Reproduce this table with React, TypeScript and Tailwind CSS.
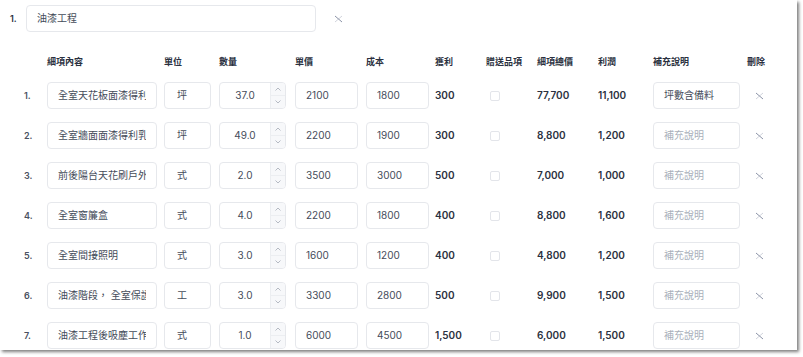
const fontStack = "font-['Inter','Noto_Sans_CJK_TC',sans-serif]";

type Item = {
  name: string;
  unit: string;
  qty: string;
  price: string;
  cost: string;
  profit: string;
  total: string;
  margin: string;
  note?: string;
};

const items: Item[] = [
  { name: "全室天花板面漆得利乳膠漆", unit: "坪", qty: "37.0", price: "2100", cost: "1800", profit: "300", total: "77,700", margin: "11,100", note: "坪數含備料" },
  { name: "全室牆面面漆得利乳膠漆", unit: "坪", qty: "49.0", price: "2200", cost: "1900", profit: "300", total: "8,800", margin: "1,200" },
  { name: "前後陽台天花刷戶外漆", unit: "式", qty: "2.0", price: "3500", cost: "3000", profit: "500", total: "7,000", margin: "1,000" },
  { name: "全室窗簾盒", unit: "式", qty: "4.0", price: "2200", cost: "1800", profit: "400", total: "8,800", margin: "1,600" },
  { name: "全室間接照明", unit: "式", qty: "3.0", price: "1600", cost: "1200", profit: "400", total: "4,800", margin: "1,200" },
  { name: "油漆階段， 全室保護", unit: "工", qty: "3.0", price: "3300", cost: "2800", profit: "500", total: "9,900", margin: "1,500" },
  { name: "油漆工程後吸塵工作", unit: "式", qty: "1.0", price: "6000", cost: "4500", profit: "1,500", total: "6,000", margin: "1,500" },
];

function CloseMark() {
  return (
    <svg width="9" height="8" viewBox="0 0 9 8" fill="none">
      <path d="M1 1 L8 7" stroke="#8b93a7" strokeWidth="1" />
      <path d="M8 1 L1 7" stroke="#8b93a7" strokeWidth="1" opacity="0.4" />
    </svg>
  );
}

// 입력칸 모양 (텍스트는 padding 안쪽에서 잘림)
function Box({ value, className = "", placeholder = false }: { value: string; className?: string; placeholder?: boolean }) {
  return (
    <div
      className={`h-[27px] flex items-center px-[10px] border border-[#e6e8ec] rounded-[4px] bg-white text-[10px] ${placeholder ? "text-[#a9afba]" : "text-[#454c5a]"} ${className}`}
    >
      <div className="w-full overflow-hidden whitespace-nowrap">{value}</div>
    </div>
  );
}

function QtyBox({ value }: { value: string }) {
  return (
    <div className="h-[27px] w-[67px] flex border border-[#e6e8ec] rounded-[4px] bg-white overflow-hidden">
      <div className="flex-1 flex items-center justify-center text-[10px] text-[#454c5a]">{value}</div>
      <div className="w-[15px] flex flex-col bg-[#f7f8fa] border-l border-[#eceef1]">
        <div className="flex-1 flex items-center justify-center border-b border-[#eceef1]">
          <svg width="6" height="4" viewBox="0 0 6 4" fill="none">
            <path d="M0.5 3.5 L3 1 L5.5 3.5" stroke="#a3a9b5" strokeWidth="0.8" />
          </svg>
        </div>
        <div className="flex-1 flex items-center justify-center">
          <svg width="6" height="4" viewBox="0 0 6 4" fill="none">
            <path d="M0.5 0.5 L3 3 L5.5 0.5" stroke="#a3a9b5" strokeWidth="0.8" />
          </svg>
        </div>
      </div>
    </div>
  );
}

export default function App() {
  return (
    <div className={`w-[803px] h-[357px] bg-white ${fontStack}`}>
      <div className="w-[797px] h-[350px] bg-white overflow-hidden shadow-[2px_2px_3px_rgba(0,0,0,0.5)] pt-[5px]">
        <div className="flex items-center">
          <div className="w-[26px] pl-[10px] text-[9px] font-semibold text-[#2b3140]">1.</div>
          <Box value="油漆工程" className="w-[290px]" />
          <div className="ml-[18px] flex items-center">
            <CloseMark />
          </div>
        </div>

        <div className="flex items-center h-[20px] mt-[20px] text-[9px] font-bold text-[#2b3140]">
          <div className="w-[47px]" />
          <div className="w-[117px]">細項內容</div>
          <div className="w-[55px]">單位</div>
          <div className="w-[76px]">數量</div>
          <div className="w-[71px]">單價</div>
          <div className="w-[69px]">成本</div>
          <div className="w-[51px]">獲利</div>
          <div className="w-[51px]">贈送品項</div>
          <div className="w-[61px]">細項總價</div>
          <div className="w-[55px]">利潤</div>
          <div className="w-[94px]">補充說明</div>
          <div>刪除</div>
        </div>

        <div className="flex flex-col gap-[13px] mt-[10px]">
          {items.map((it, i) => (
            <div key={i} className="flex items-center">
              <div className="w-[47px] pl-[24px] text-[9px] font-semibold text-[#4a5161]">{i + 1}.</div>
              <div className="w-[117px]">
                <Box value={it.name} className="w-[110px]" />
              </div>
              <div className="w-[55px]">
                <Box value={it.unit} className="w-[47px] pl-[12px]" />
              </div>
              <div className="w-[76px]">
                <QtyBox value={it.qty} />
              </div>
              <div className="w-[71px]">
                <Box value={it.price} className="w-[63px]" />
              </div>
              <div className="w-[69px]">
                <Box value={it.cost} className="w-[63px]" />
              </div>
              <div className="w-[51px] text-[10px] font-semibold text-[#2b3140]">{it.profit}</div>
              <div className="w-[51px] pl-[4px]">
                <div className="w-[10px] h-[10px] border border-[#e3e5ea] rounded-[2px] bg-white" />
              </div>
              <div className="w-[61px] text-[10px] font-semibold text-[#2b3140]">{it.total}</div>
              <div className="w-[55px] text-[10px] font-semibold text-[#2b3140]">{it.margin}</div>
              <div className="w-[94px]">
                <Box value={it.note ?? "補充說明"} placeholder={!it.note} className="w-[87px]" />
              </div>
              <div className="pl-[8px] flex items-center">
                <CloseMark />
              </div>
            </div>
          ))}
        </div>
      </div>
    </div>
  );
}
